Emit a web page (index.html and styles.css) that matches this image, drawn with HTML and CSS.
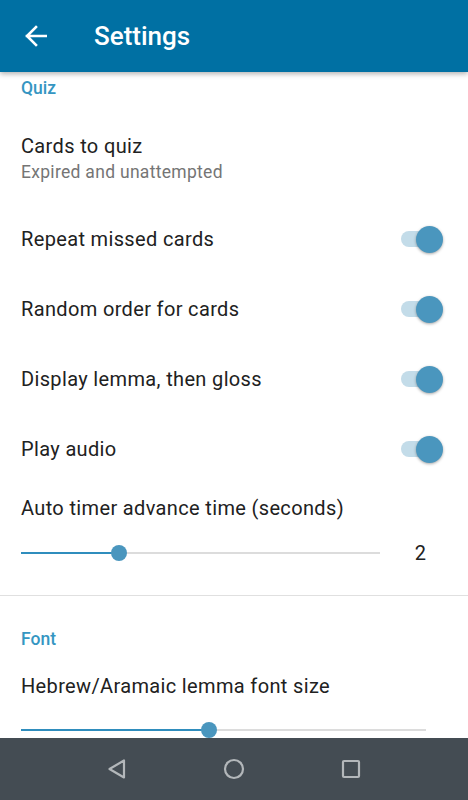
FILE: index.html
```html
<!DOCTYPE html>
<html lang="en">
<head>
    <meta charset="UTF-8">
    <meta name="viewport" content="width=device-width, initial-scale=1.0" />
    <title>Settings</title>
    <link rel="stylesheet" href="styles.css">
</head>
<body>
    <div class="screen">
        <header class="appbar">
            <svg class="back" width="22" height="22" viewBox="0 0 22 22">
                <path d="M21 11H2M11 2L2 11l9 9" fill="none" stroke="white" stroke-width="2.6" stroke-linecap="square"/>
            </svg>
            <h1>Settings</h1>
        </header>

        <main class="prefs">
            <div class="category">Quiz</div>

            <div class="pref pref-text">
                <div class="title">Cards to quiz</div>
                <div class="summary">Expired and unattempted</div>
            </div>

            <div class="pref pref-switch">
                <div class="title">Repeat missed cards</div>
                <div class="switch on"><span class="thumb"></span></div>
            </div>
            <div class="pref pref-switch">
                <div class="title">Random order for cards</div>
                <div class="switch on"><span class="thumb"></span></div>
            </div>
            <div class="pref pref-switch">
                <div class="title">Display lemma, then gloss</div>
                <div class="switch on"><span class="thumb"></span></div>
            </div>
            <div class="pref pref-switch">
                <div class="title">Play audio</div>
                <div class="switch on"><span class="thumb"></span></div>
            </div>

            <div class="pref pref-seek">
                <div class="title">Auto timer advance time (seconds)</div>
                <div class="seek-row">
                    <div class="seekbar">
                        <div class="fill" style="width: 27.3%"><span class="knob"></span></div>
                    </div>
                    <div class="value">2</div>
                </div>
            </div>

            <hr class="divider">

            <div class="category category-font">Font</div>

            <div class="pref pref-seek pref-font">
                <div class="title">Hebrew/Aramaic lemma font size</div>
                <div class="seek-row">
                    <div class="seekbar">
                        <div class="fill" style="width: 46.4%"><span class="knob"></span></div>
                    </div>
                </div>
            </div>
        </main>

        <nav class="navbar">
            <svg width="20" height="22" viewBox="0 0 20 22">
                <path d="M17 2.5v17L2.5 11z" fill="none" stroke="#b3b7ba" stroke-width="2.2" stroke-linejoin="round"/>
            </svg>
            <svg width="22" height="22" viewBox="0 0 22 22">
                <circle cx="11" cy="11" r="9" fill="none" stroke="#b3b7ba" stroke-width="2.2"/>
            </svg>
            <svg width="20" height="20" viewBox="0 0 20 20">
                <rect x="2" y="2" width="16" height="16" rx="1" fill="none" stroke="#b3b7ba" stroke-width="2.2"/>
            </svg>
        </nav>
    </div>
</body>
</html>
```

FILE: styles.css
```css
html, body {margin: 0; padding: 0; background: white;}
body {font-family: Roboto, "Noto Sans", sans-serif; color: #212121;}

.screen {display: flex; flex-direction: column; width: 468px; height: 800px; overflow: hidden;}

.appbar {
    position: relative; z-index: 2;
    display: flex; align-items: center;
    height: 72px; flex-shrink: 0;
    background-color: #0070a3;
    box-shadow: 0 2px 5px rgba(0, 0, 0, 0.3);
}
.appbar .back {margin-left: 25px;}
.appbar h1 {margin: 0 0 0 47px; font-size: 26px; font-weight: 500; color: white; line-height: 1;}

.prefs {flex: 1; overflow: hidden;}

.category {padding: 6px 21px 12px; font-size: 17.5px; line-height: 20px; font-weight: 500; color: #3596c2;}
.category-font {padding-top: 33px; padding-bottom: 0;}

.pref {padding: 0 25px 0 21px;}
.title {font-size: 20px; line-height: 26px; letter-spacing: 0.35px; color: #212121;}
.summary {font-size: 17.5px; line-height: 26px; letter-spacing: 0.3px; color: #757575;}

.pref-text {padding-top: 23px; padding-bottom: 19px;}

.pref-switch {display: flex; align-items: center; justify-content: space-between; height: 70px;}

.switch {position: relative; width: 42px; height: 27px; display: flex; align-items: center;}
.switch::before {content: ""; width: 40px; height: 16px; border-radius: 8px; background: #c3dce9;}
.switch .thumb {
    position: absolute; right: 0; top: 0;
    width: 27px; height: 27px; border-radius: 50%;
    background: #4a96be;
    box-shadow: 0 1px 3px rgba(0, 0, 0, 0.35);
}

.pref-seek {padding-top: 11px;}
.seek-row {display: flex; align-items: center; height: 40px; margin-top: 12px; padding-bottom: 22px;}
.seekbar {flex: 1; height: 2px; background: #dcdcdc;}
.seekbar .fill {position: relative; height: 2px; background: #2f8dbd;}
.seekbar .knob {
    position: absolute; right: -8px; top: -7px;
    width: 16px; height: 16px; border-radius: 50%;
    background: #4a96be;
}
.value {width: 46px; text-align: right; font-size: 20px; color: #212121; margin-right: 17px;}

.pref-font {padding-top: 24px; padding-right: 42px;}
.pref-font .seek-row {margin-top: 11px;}

.divider {margin: 0; border: 0; border-top: 1px solid #e0e0e0;}

.navbar {
    display: grid; grid-template-columns: repeat(3, 117px);
    justify-content: center; justify-items: center; align-items: center;
    height: 62px; flex-shrink: 0;
    background: #444c53;
}
```
